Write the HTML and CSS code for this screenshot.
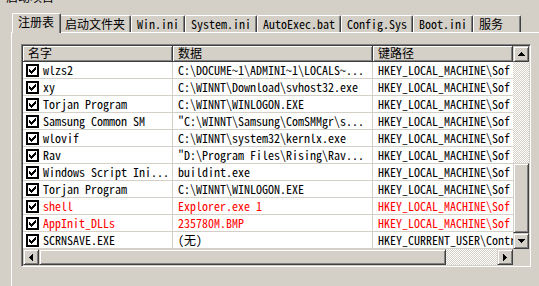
FILE: index.html
```html
<!DOCTYPE html>
<html lang="zh-CN">
<head>
    <meta charset="UTF-8">
    <title>启动项目</title>
    <link rel="stylesheet" href="styles.css">
</head>
<body>
    <div class="caption">启动项目</div>

    <div class="tabs">
        <div class="tab active">注册表</div>
        <div class="tab">启动文件夹</div>
        <div class="tab">Win.ini</div>
        <div class="tab">System.ini</div>
        <div class="tab">AutoExec.bat</div>
        <div class="tab">Config.Sys</div>
        <div class="tab">Boot.ini</div>
        <div class="tab last">服务</div>
    </div>

    <div class="panel">
        <div class="listview">
            <div class="list-body">
                <div class="header">
                    <div class="hcell col-name">名字</div>
                    <div class="hcell col-data">数据</div>
                    <div class="hcell col-key">键路径</div>
                </div>

                <div class="row">
                    <div class="cell col-name"><svg class="check" width="13" height="13" viewBox="0 0 13 13"><path d="M0 0h13v13h-13zM2 2v9h9v-9z"/><path d="M9 3h1v3h-1v1h-1v1h-1v1h-1v1h-1v-1h-1v-1h-1v-3h1v1h1v1h1v-1h1v-1h1v-1h1z"/></svg>wlzs2</div>
                    <div class="cell col-data">C:\DOCUME~1\ADMINI~1\LOCALS~...</div>
                    <div class="cell col-key">HKEY_LOCAL_MACHINE\Sof</div>
                </div>
                <div class="row">
                    <div class="cell col-name"><svg class="check" width="13" height="13" viewBox="0 0 13 13"><path d="M0 0h13v13h-13zM2 2v9h9v-9z"/><path d="M9 3h1v3h-1v1h-1v1h-1v1h-1v1h-1v-1h-1v-1h-1v-3h1v1h1v1h1v-1h1v-1h1v-1h1z"/></svg>xy</div>
                    <div class="cell col-data">C:\WINNT\Download\svhost32.exe</div>
                    <div class="cell col-key">HKEY_LOCAL_MACHINE\Sof</div>
                </div>
                <div class="row">
                    <div class="cell col-name"><svg class="check" width="13" height="13" viewBox="0 0 13 13"><path d="M0 0h13v13h-13zM2 2v9h9v-9z"/><path d="M9 3h1v3h-1v1h-1v1h-1v1h-1v1h-1v-1h-1v-1h-1v-3h1v1h1v1h1v-1h1v-1h1v-1h1z"/></svg>Torjan Program</div>
                    <div class="cell col-data">C:\WINNT\WINLOGON.EXE</div>
                    <div class="cell col-key">HKEY_LOCAL_MACHINE\Sof</div>
                </div>
                <div class="row">
                    <div class="cell col-name"><svg class="check" width="13" height="13" viewBox="0 0 13 13"><path d="M0 0h13v13h-13zM2 2v9h9v-9z"/><path d="M9 3h1v3h-1v1h-1v1h-1v1h-1v1h-1v-1h-1v-1h-1v-3h1v1h1v1h1v-1h1v-1h1v-1h1z"/></svg>Samsung Common SM</div>
                    <div class="cell col-data">"C:\WINNT\Samsung\ComSMMgr\s...</div>
                    <div class="cell col-key">HKEY_LOCAL_MACHINE\Sof</div>
                </div>
                <div class="row">
                    <div class="cell col-name"><svg class="check" width="13" height="13" viewBox="0 0 13 13"><path d="M0 0h13v13h-13zM2 2v9h9v-9z"/><path d="M9 3h1v3h-1v1h-1v1h-1v1h-1v1h-1v-1h-1v-1h-1v-3h1v1h1v1h1v-1h1v-1h1v-1h1z"/></svg>wlovif</div>
                    <div class="cell col-data">C:\WINNT\system32\kernlx.exe</div>
                    <div class="cell col-key">HKEY_LOCAL_MACHINE\Sof</div>
                </div>
                <div class="row">
                    <div class="cell col-name"><svg class="check" width="13" height="13" viewBox="0 0 13 13"><path d="M0 0h13v13h-13zM2 2v9h9v-9z"/><path d="M9 3h1v3h-1v1h-1v1h-1v1h-1v1h-1v-1h-1v-1h-1v-3h1v1h1v1h1v-1h1v-1h1v-1h1z"/></svg>Rav</div>
                    <div class="cell col-data">"D:\Program Files\Rising\Rav...</div>
                    <div class="cell col-key">HKEY_LOCAL_MACHINE\Sof</div>
                </div>
                <div class="row">
                    <div class="cell col-name"><svg class="check" width="13" height="13" viewBox="0 0 13 13"><path d="M0 0h13v13h-13zM2 2v9h9v-9z"/><path d="M9 3h1v3h-1v1h-1v1h-1v1h-1v1h-1v-1h-1v-1h-1v-3h1v1h1v1h1v-1h1v-1h1v-1h1z"/></svg>Windows Script Ini...</div>
                    <div class="cell col-data">buildint.exe</div>
                    <div class="cell col-key">HKEY_LOCAL_MACHINE\Sof</div>
                </div>
                <div class="row">
                    <div class="cell col-name"><svg class="check" width="13" height="13" viewBox="0 0 13 13"><path d="M0 0h13v13h-13zM2 2v9h9v-9z"/><path d="M9 3h1v3h-1v1h-1v1h-1v1h-1v1h-1v-1h-1v-1h-1v-3h1v1h1v1h1v-1h1v-1h1v-1h1z"/></svg>Torjan Program</div>
                    <div class="cell col-data">C:\WINNT\WINLOGON.EXE</div>
                    <div class="cell col-key">HKEY_LOCAL_MACHINE\Sof</div>
                </div>
                <div class="row warn">
                    <div class="cell col-name"><svg class="check" width="13" height="13" viewBox="0 0 13 13"><path d="M0 0h13v13h-13zM2 2v9h9v-9z"/><path d="M9 3h1v3h-1v1h-1v1h-1v1h-1v1h-1v-1h-1v-1h-1v-3h1v1h1v1h1v-1h1v-1h1v-1h1z"/></svg>shell</div>
                    <div class="cell col-data">Explorer.exe 1</div>
                    <div class="cell col-key">HKEY_LOCAL_MACHINE\Sof</div>
                </div>
                <div class="row warn">
                    <div class="cell col-name"><svg class="check" width="13" height="13" viewBox="0 0 13 13"><path d="M0 0h13v13h-13zM2 2v9h9v-9z"/><path d="M9 3h1v3h-1v1h-1v1h-1v1h-1v1h-1v-1h-1v-1h-1v-3h1v1h1v1h1v-1h1v-1h1v-1h1z"/></svg>AppInit_DLLs</div>
                    <div class="cell col-data">235780M.BMP</div>
                    <div class="cell col-key">HKEY_LOCAL_MACHINE\Sof</div>
                </div>
                <div class="row">
                    <div class="cell col-name"><svg class="check" width="13" height="13" viewBox="0 0 13 13"><path d="M0 0h13v13h-13zM2 2v9h9v-9z"/><path d="M9 3h1v3h-1v1h-1v1h-1v1h-1v1h-1v-1h-1v-1h-1v-3h1v1h1v1h1v-1h1v-1h1v-1h1z"/></svg>SCRNSAVE.EXE</div>
                    <div class="cell col-data">(无)</div>
                    <div class="cell col-key">HKEY_CURRENT_USER\Contr</div>
                </div>
            </div>

            <div class="vscroll">
                <div class="sb-btn"><svg width="7" height="4" viewBox="0 0 7 4"><path d="M3 0h1v1h1v1h1v1h1v1h-7v-1h1v-1h1v-1h1z"/></svg></div>
                <div class="track v-top"></div>
                <div class="thumb v-thumb"></div>
                <div class="sb-btn"><svg width="7" height="4" viewBox="0 0 7 4"><path d="M0 0h7v1h-1v1h-1v1h-1v1h-1v-1h-1v-1h-1v-1h-1z"/></svg></div>
            </div>

            <div class="hscroll">
                <div class="sb-btn"><svg width="4" height="7" viewBox="0 0 4 7"><path d="M3 0h1v7h-1v-1h-1v-1h-1v-1h-1v-1h1v-1h1v-1h1z"/></svg></div>
                <div class="thumb h-thumb"></div>
                <div class="track h-rest"></div>
                <div class="sb-btn"><svg width="4" height="7" viewBox="0 0 4 7"><path d="M0 0h1v1h1v1h1v1h1v1h-1v1h-1v1h-1v1h-1z"/></svg></div>
            </div>

            <div class="corner"></div>
        </div>
    </div>
</body>
</html>
```

FILE: styles.css
```css
body {
    margin: 0;
    height: 286px;
    overflow: hidden;
    background: #d4d0c8;
    color: #000;
    font-family: "Noto Sans Mono CJK SC", "Noto Sans CJK SC", "Liberation Mono", monospace;
    font-size: 12px;
}

.caption {
    margin: -9px 0 0 6px;
    height: 12px;
    line-height: 12px;
}

/* tab strip */
.tabs {
    display: flex;
    align-items: flex-end;
    height: 19px;
    margin: 10px 0 0 12px;
    position: relative;
    z-index: 1;
}

.tab {
    box-sizing: border-box;
    height: 17px;
    padding: 0 5px;
    line-height: 15px;
    white-space: nowrap;
    border-top: 1px solid #fff;
    border-left: 1px solid #fff;
    border-right: 1px solid #404040;
    border-radius: 2px 2px 0 0;
    box-shadow: inset -1px 0 #808080;
    background: #d4d0c8;
}

.tab.active {
    height: 20px;
    margin: 0 -2px -1px 0;
    padding: 0 6px 0 5px;
    line-height: 15px;
    position: relative;
    z-index: 2;
}

.tab.last {
    min-width: 48px;
}

.panel {
    box-sizing: border-box;
    margin-left: 11px;
    height: 254px;
    padding: 11px 0 0 9px;
    border-top: 1px solid #fff;
    border-left: 1px solid #fff;
}

/* list view */
.listview {
    box-sizing: border-box;
    width: 510px;
    height: 223px;
    padding: 1px;
    border: 1px solid;
    border-color: #808080 #fff #fff #808080;
    box-shadow: inset 1px 1px #404040, inset -1px -1px #d4d0c8;
    background: #fff;
    display: grid;
    grid-template-columns: 490px 16px;
    grid-template-rows: 203px 16px;
}

.list-body {
    background: #fff;
}

.header,
.row {
    display: flex;
    white-space: nowrap;
}

.col-name { width: 150px; }
.col-data { width: 200px; }
.col-key { width: 140px; }

.hcell {
    box-sizing: border-box;
    flex-shrink: 0;
    height: 16px;
    padding-left: 5px;
    line-height: 14px;
    background: #d4d0c8;
    border-right: 1px solid #404040;
    border-bottom: 1px solid #404040;
    box-shadow: inset 1px 1px #fff, inset -1px -1px #808080;
}

.row {
    height: 17px;
    box-sizing: border-box;
    border-bottom: 1px solid #d4d0c8;
}

.cell {
    box-sizing: border-box;
    flex-shrink: 0;
    display: flex;
    align-items: center;
    height: 16px;
    padding-left: 5px;
    line-height: 16px;
    border-right: 1px solid #d4d0c8;
}

.cell.col-name {
    padding-left: 3px;
}

.cell.col-key {
    border-right: 0;
}

.check {
    flex-shrink: 0;
    margin-right: 4px;
    shape-rendering: crispEdges;
}

.row.warn {
    color: #f00;
}

/* scroll bars */
.vscroll {
    display: flex;
    flex-direction: column;
}

.hscroll {
    display: flex;
}

.sb-btn,
.thumb {
    box-sizing: border-box;
    flex-shrink: 0;
    background: #d4d0c8;
    border: 1px solid;
    border-color: #d4d0c8 #404040 #404040 #d4d0c8;
    box-shadow: inset 1px 1px #fff, inset -1px -1px #808080;
}

.sb-btn {
    width: 16px;
    height: 16px;
    display: flex;
    align-items: center;
    justify-content: center;
}

.sb-btn svg {
    shape-rendering: crispEdges;
}

.track {
    flex-shrink: 0;
    background: repeating-conic-gradient(#fff 0 25%, #d4d0c8 0 50%) 0 0 / 2px 2px;
}

.v-top { height: 101px; }
.v-thumb { height: 70px; }
.h-thumb { width: 407px; }
.h-rest { width: 51px; }

.corner {
    background: #d4d0c8;
}
```
